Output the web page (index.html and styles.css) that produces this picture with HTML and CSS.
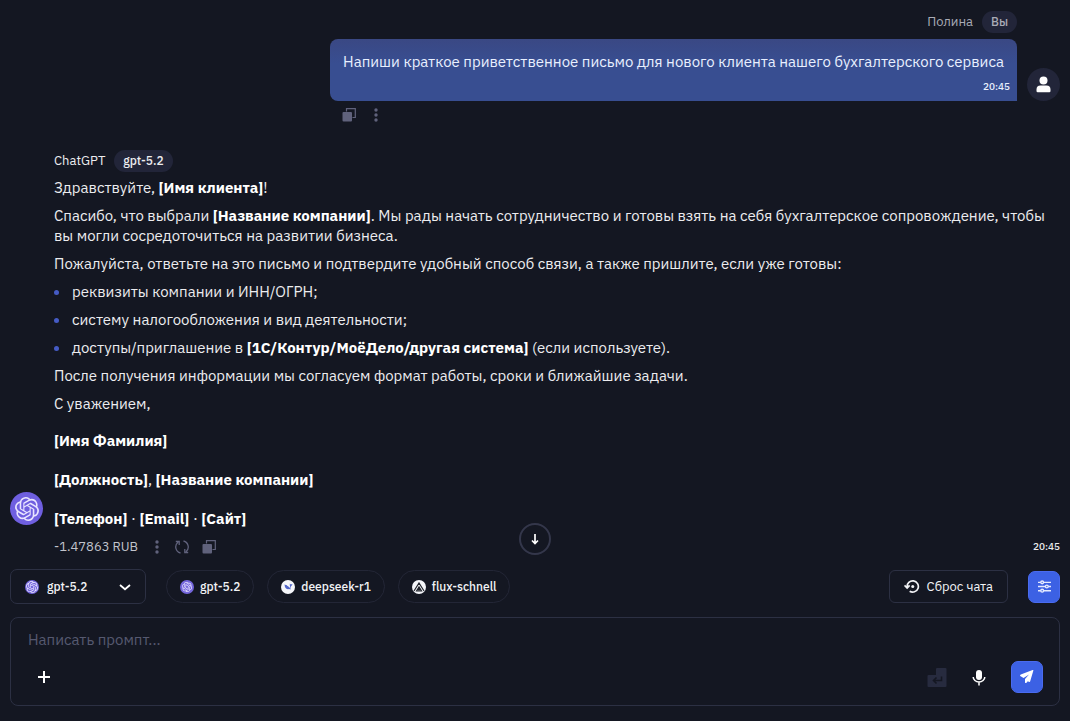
FILE: index.html
```html
<!DOCTYPE html>
<html lang="ru">
<head>
<meta charset="utf-8">
<meta name="viewport" content="width=device-width, initial-scale=1">
<title>ChatGPT</title>
<link rel="stylesheet" href="styles.css">
</head>
<body>
<svg class="sprite" aria-hidden="true">
  <symbol id="openai" viewBox="0 0 24 24"><path fill="currentColor" d="M22.2819 9.8211a5.9847 5.9847 0 0 0-.5157-4.9108 6.0462 6.0462 0 0 0-6.5098-2.9A6.0651 6.0651 0 0 0 4.9807 4.1818a5.9847 5.9847 0 0 0-3.9977 2.9 6.0462 6.0462 0 0 0 .7427 7.0966 5.98 5.98 0 0 0 .511 4.9107 6.051 6.051 0 0 0 6.5146 2.9001A5.9847 5.9847 0 0 0 13.2599 24a6.0557 6.0557 0 0 0 5.7718-4.2058 5.9894 5.9894 0 0 0 3.9977-2.9001 6.0557 6.0557 0 0 0-.7475-7.0729zm-9.022 12.6081a4.4755 4.4755 0 0 1-2.8764-1.0408l.1419-.0804 4.7783-2.7582a.7948.7948 0 0 0 .3927-.6813v-6.7369l2.02 1.1686a.071.071 0 0 1 .038.052v5.5826a4.504 4.504 0 0 1-4.4945 4.4944zm-9.6607-4.1254a4.4708 4.4708 0 0 1-.5346-3.0137l.142.0852 4.783 2.7582a.7712.7712 0 0 0 .7806 0l5.8428-3.3685v2.3324a.0804.0804 0 0 1-.0332.0615L9.74 19.9502a4.4992 4.4992 0 0 1-6.1408-1.6464zM2.3408 7.8956a4.485 4.485 0 0 1 2.3655-1.9728V11.6a.7664.7664 0 0 0 .3879.6765l5.8144 3.3543-2.0201 1.1685a.0757.0757 0 0 1-.071 0l-4.8303-2.7865A4.504 4.504 0 0 1 2.3408 7.872zm16.5963 3.8558L13.1038 8.364 15.1192 7.2a.0757.0757 0 0 1 .071 0l4.8303 2.7913a4.4944 4.4944 0 0 1-.6765 8.1042v-5.6772a.79.79 0 0 0-.407-.667zm2.0107-3.0231l-.142-.0852-4.7735-2.7818a.7759.7759 0 0 0-.7854 0L9.409 9.2297V6.8974a.0662.0662 0 0 1 .0284-.0615l4.8303-2.7866a4.4992 4.4992 0 0 1 6.6802 4.66zM8.3065 12.863l-2.02-1.1638a.0804.0804 0 0 1-.038-.0567V6.0742a4.4992 4.4992 0 0 1 7.3757-3.4537l-.142.0805L8.704 5.459a.7948.7948 0 0 0-.3927.6813zm1.0976-2.3654l2.602-1.4998 2.6069 1.4998v2.9994l-2.5974 1.4997-2.6067-1.4997Z"/></symbol>
  <symbol id="copy" viewBox="0 0 14 14"><path d="M4.500 3.500v-2.800h8.800v8.800h-2.800" fill="none" stroke="currentColor" stroke-width="1.200"/><rect x="0.500" y="4" width="9.500" height="9.500" rx="1" fill="currentColor"/></symbol>
  <symbol id="dots" viewBox="0 0 4 14"><g fill="currentColor"><circle cx="2" cy="2" r="1.700"/><circle cx="2" cy="7" r="1.700"/><circle cx="2" cy="12" r="1.700"/></g></symbol>
</svg>

<main class="chat">
  <section class="message-user">
    <div class="user-main">
      <header class="who who-user"><span>Полина</span><span class="tag">Вы</span></header>
      <div class="bubble">
        <p>Напиши краткое приветственное письмо для нового клиента нашего бухгалтерского сервиса</p>
        <time>20:45</time>
      </div>
      <div class="actions actions-user">
        <button type="button" aria-label="Копировать"><svg class="icon-copy"><use href="#copy"/></svg></button>
        <button type="button" aria-label="Ещё"><svg class="icon-dots"><use href="#dots"/></svg></button>
      </div>
    </div>
    <div class="avatar avatar-user"><svg width="15" height="17" viewBox="0 0 15 17" fill="#fff"><circle cx="7.500" cy="4.500" r="4"/><path d="M0.500 15v-1.500a4 4 0 0 1 4-4h6a4 4 0 0 1 4 4V15a1.200 1.200 0 0 1-1.200 1.200H1.700A1.200 1.200 0 0 1 .5 15z"/></svg></div>
  </section>

  <section class="message-bot">
    <div class="avatar avatar-bot"><svg width="24" height="24"><use href="#openai"/></svg></div>
    <div class="bot-main">
      <header class="who"><span>ChatGPT</span><span class="tag">gpt-5.2</span></header>
      <article class="answer">
        <p>Здравствуйте, <strong>[Имя клиента]</strong>!</p>
        <p>Спасибо, что выбрали <strong>[Название компании]</strong>. Мы рады начать сотрудничество и готовы взять на себя бухгалтерское сопровождение, чтобы вы могли сосредоточиться на развитии бизнеса.</p>
        <p>Пожалуйста, ответьте на это письмо и подтвердите удобный способ связи, а также пришлите, если уже готовы:</p>
        <ul>
          <li>реквизиты компании и ИНН/ОГРН;</li>
          <li>систему налогообложения и вид деятельности;</li>
          <li>доступы/приглашение в <strong>[1С/Контур/МоёДело/другая система]</strong> (если используете).</li>
        </ul>
        <p>После получения информации мы согласуем формат работы, сроки и ближайшие задачи.</p>
        <p>С уважением,</p>
        <div class="signature">
          <p><strong>[Имя Фамилия]</strong></p>
          <p><strong>[Должность]</strong>, <strong>[Название компании]</strong></p>
          <p><strong>[Телефон]</strong> · <strong>[Email]</strong> · <strong>[Сайт]</strong></p>
        </div>
      </article>
      <footer class="meta">
        <span class="cost">-1.47863 RUB</span>
        <div class="actions actions-bot">
          <button type="button" aria-label="Ещё"><svg class="icon-dots"><use href="#dots"/></svg></button>
          <button type="button" aria-label="Повторить"><svg width="14" height="14" viewBox="0 0 14 14" fill="none" stroke="currentColor" stroke-width="1.300"><path d="M5.500 13A6.200 6.200 0 0 1 3 2.200M.8 1.500h3.400v3.400M8.500 1A6.200 6.200 0 0 1 11 11.800M13.200 12.500H9.800V9.100"/></svg></button>
          <button type="button" aria-label="Копировать"><svg class="icon-copy"><use href="#copy"/></svg></button>
        </div>
        <time>20:45</time>
      </footer>
    </div>
  </section>
  <button class="scroll-down" type="button" aria-label="Вниз"><svg width="8" height="11" viewBox="0 0 8 11" fill="none" stroke="currentColor" stroke-width="1.700"><path d="M4 0v9.500M1 6.500l3 3 3-3"/></svg></button>
</main>

<div class="toolbar">
  <label class="model">
    <span class="badge badge-violet"><svg width="12" height="12"><use href="#openai"/></svg></span>
    <select aria-label="Модель"><option>gpt-5.2</option></select>
    <svg class="chevron" width="12" height="7" viewBox="0 0 12 7" fill="none" stroke="#fff" stroke-width="1.800"><path d="M1 1l5 4.200L11 1"/></svg>
  </label>
  <div class="chips">
    <button type="button" class="chip"><span class="badge badge-violet"><svg width="10" height="10"><use href="#openai"/></svg></span>gpt-5.2</button>
    <button type="button" class="chip"><span class="badge badge-white"><svg width="9" height="7" viewBox="0 0 20 16" fill="#5266c9"><path d="M1 3c2 2 4 1 6 3 3 1 4 4 7 5 1-2-1-4-1-6V1c1 2 3 3 6 1-.5 3-2 4-3 5 0 3-1 4-2 5l2 2c-3 1-4-1-6 0C4 15 1 10 1 3z"/></svg></span>deepseek-r1</button>
    <button type="button" class="chip"><span class="badge badge-white"><svg width="12" height="10" viewBox="0 0 24 20" fill="none" stroke="#20232b" stroke-width="2.400"><path d="M2 18L12 2l10 16M7 18l5-8 5 8zM12 10v8"/></svg></span>flux-schnell</button>
  </div>
  <button type="button" class="reset"><svg width="16" height="15" viewBox="0 0 17 16" fill="none" stroke="currentColor" stroke-width="1.800"><path d="M3.300 8.500A6 6 0 1 1 6 13M.5 6.800l2.800 2.800L6 6.800"/><circle cx="9.300" cy="8" r="1.600" fill="currentColor" stroke="none"/></svg>Сброс чата</button>
  <button type="button" class="square settings" aria-label="Настройки"><svg width="13" height="13" viewBox="0 0 14 14" fill="none" stroke="#e4eaff" stroke-width="1.500"><path d="M0 2.500h3M6 2.500h8M0 7h8M11 7h3M0 11.500h3M6 11.500h8"/><circle cx="4.500" cy="2.500" r="1.500"/><circle cx="9.500" cy="7" r="1.500"/><circle cx="4.500" cy="11.500" r="1.500"/></svg></button>
</div>

<form class="composer">
  <textarea rows="1" aria-label="Промпт" placeholder="Написать промпт..."></textarea>
  <div class="composer-row">
    <button type="button" class="plain" aria-label="Добавить"><svg width="12" height="12" viewBox="0 0 12 12" stroke="#fff" stroke-width="2"><path d="M6 0v12M0 6h12"/></svg></button>
    <button type="button" class="plain enter" aria-label="Ввод"><svg width="20" height="20" viewBox="0 0 20 20"><path fill="#272b3f" d="M9 2a1 1 0 0 1 1-1h8.500a1 1 0 0 1 1 1v17a1 1 0 0 1-1 1h-17a1 1 0 0 1-1-1V9a1 1 0 0 1 1-1H9z"/><path d="M14.500 9.500v4H7M9.500 10.500l-3 3 3 3" fill="none" stroke="#141722" stroke-width="1.600"/></svg></button>
    <button type="button" class="plain" aria-label="Микрофон"><svg width="14" height="17" viewBox="0 0 14 17"><rect x="4" y="1" width="6" height="10" rx="3" fill="#fff"/><path d="M1.200 8a5.800 5 0 0 0 11.600 0M7 13v3.500" fill="none" stroke="#fff" stroke-width="1.500"/></svg></button>
    <button type="submit" class="square" aria-label="Отправить"><svg width="14" height="14" viewBox="0 0 14 14"><path fill="#fff" d="M13.300.7c.3-.5-.1-.9-.7-.7L.8 4.400c-.9.400-1 1.400-.2 1.800l3 1.700L9 4.600 5 9v3.200c0 .9.900 1.200 1.500.5l1.300-1.500 1 .6c.6.400 1.200.2 1.400-.5z"/></svg></button>
  </div>
</form>
</body>
</html>
```
FILE: styles.css
```css
* { box-sizing: border-box; }

body {
  margin: 0;
  min-height: 100vh;
  padding: 11px 10px 15px;
  display: flex;
  flex-direction: column;
  background: #141722;
  color: #ececef;
  font: 15px/20px "IBM Plex Sans", "Noto Sans", sans-serif;
}

p, ul { margin: 0; padding: 0; }
button, select, textarea { font: inherit; color: inherit; }
button { padding: 0; border: 0; background: none; display: flex; align-items: center; justify-content: center; }
svg { display: block; flex: none; }
strong { font-weight: 700; color: #fff; }
time { font-size: 10px; line-height: 14px; font-weight: 500; }

.sprite { position: absolute; width: 0; height: 0; }

.chat { position: relative; flex: 1; }

.who { display: flex; align-items: center; gap: 9px; font-size: 13px; line-height: 22px; }
.who-user { justify-content: flex-end; color: #a9abb6; }
.tag { padding: 0 9px; border-radius: 11px; background: #222539; font-size: 12px; font-weight: 500; }

.avatar { flex: none; align-self: flex-end; width: 33px; height: 33px; border-radius: 50%; display: flex; align-items: center; justify-content: center; }
.avatar-user { background: #222539; margin-bottom: 28px; }
.avatar-bot { background: #6f5fe0; color: #e9e5ff; margin-bottom: 32px; }

.message-user { display: flex; justify-content: flex-end; gap: 10px; }
.bubble {
  margin-top: 6px;
  padding: 13px 7px 7px 13px;
  border-radius: 8px 8px 0 8px;
  background: linear-gradient(#3a4884, #384e91 40%);
  color: #e9f0ff;
  display: flex;
  flex-direction: column;
  gap: 8px;
}
.bubble p { padding-right: 6px; }
.bubble time { align-self: flex-end; }

.actions { display: flex; align-items: center; gap: 18px; color: #60627c; }
.actions-user { height: 28px; padding-left: 12px; }
.actions-bot { gap: 16px; }
.actions-bot button:last-child { margin-left: -3px; }
.icon-copy { width: 14px; height: 14px; }
.icon-dots { width: 4px; height: 14px; }

.message-bot { display: flex; gap: 11px; margin-top: 21px; }
.bot-main { flex: 1; min-width: 0; }
.answer { display: flex; flex-direction: column; gap: 8px; margin-top: 6px; }
.answer ul { list-style: none; display: flex; flex-direction: column; gap: 8px; }
.answer li { position: relative; padding-left: 18px; }
.answer li::before { content: ""; position: absolute; left: 0; top: 8px; width: 5px; height: 5px; border-radius: 50%; background: #455bc5; }
.signature { display: flex; flex-direction: column; gap: 19px; margin-top: 9px; }
.meta { display: flex; align-items: center; gap: 17px; height: 20px; margin-top: 8px; }
.meta time { margin-left: auto; }
.cost { font-size: 13px; color: #c2c4cc; }

.scroll-down {
  position: absolute;
  left: 50%;
  bottom: 14px;
  width: 32px;
  height: 32px;
  margin-left: -16px;
  border: 2px solid #34374b;
  border-radius: 50%;
  background: #141722;
  color: #fff;
}

.toolbar { display: flex; align-items: center; gap: 20px; font-size: 12px; font-weight: 500; color: #f2f3f6; }
.model { position: relative; width: 136px; height: 35px; border: 1px solid #2c3043; border-radius: 7px; display: flex; align-items: center; padding-left: 14px; }
.model select { flex: 1; height: 33px; padding: 0 0 0 8px; border: 0; background: none; appearance: none; }
.chevron { position: absolute; right: 14px; top: 14px; pointer-events: none; }
.badge { flex: none; width: 14px; height: 14px; border-radius: 50%; display: flex; align-items: center; justify-content: center; }
.badge-violet { background: #7466dc; color: #e9e5ff; }
.badge-white { background: #f5f6fa; }
.chips { display: flex; gap: 13px; }
.chip { height: 33px; padding: 0 13px; gap: 6px; border: 1px solid #232636; border-radius: 17px; }
.reset { margin-left: auto; height: 33px; padding: 0 14px; gap: 7px; border: 1px solid #2c3043; border-radius: 6px; font-size: 13px; font-weight: 400; }
.square { width: 32px; height: 32px; border: 1px solid #4a6bef; border-radius: 7px; background: #3c61e4; }

.composer { margin-top: 13px; height: 89px; border: 1px solid #2c3043; border-radius: 8px; padding: 12px 16px 12px 17px; display: flex; flex-direction: column; justify-content: space-between; }
.composer textarea { height: 20px; padding: 0; border: 0; outline: 0; resize: none; background: none; overflow: hidden; line-height: 20px; }
.composer textarea::placeholder { color: #565970; opacity: 1; }
.composer-row { display: flex; align-items: center; gap: 10px; }
.plain { width: 32px; height: 32px; }
.composer-row .enter { margin-left: auto; }
.composer-row .square { margin-left: 6px; }
```
